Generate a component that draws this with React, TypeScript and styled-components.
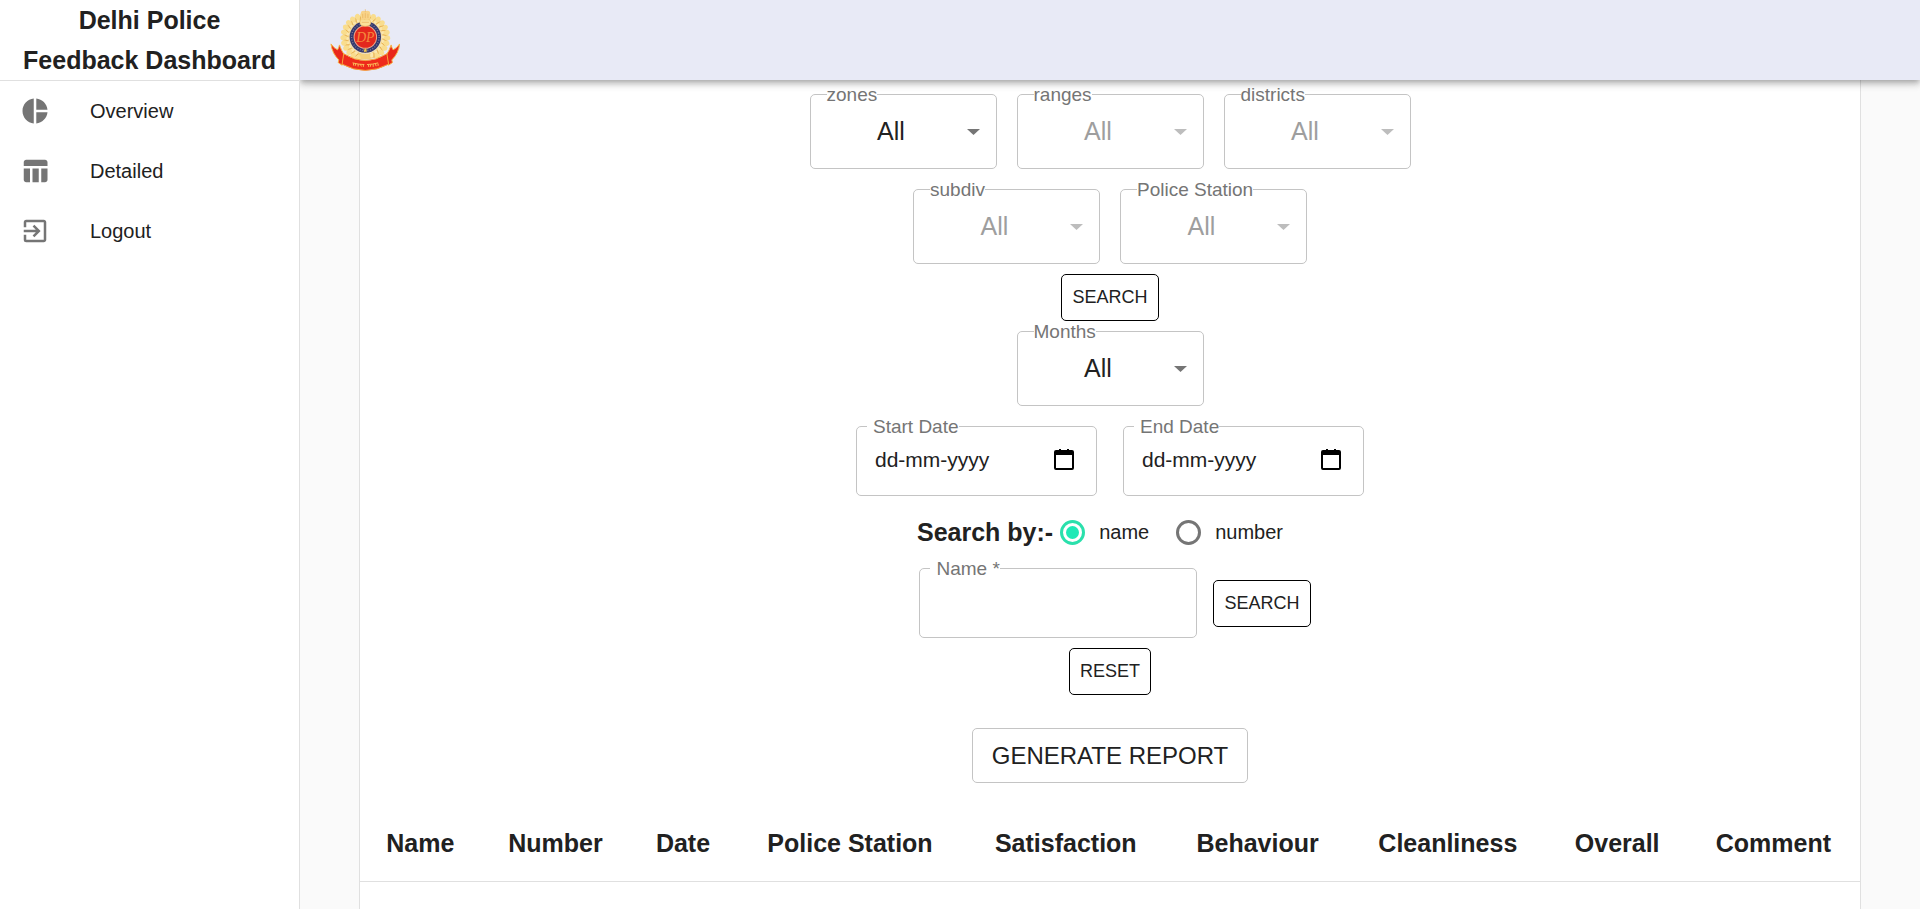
import React, { useState } from "react";
import styled, { createGlobalStyle } from "styled-components";
import { MdExitToApp, MdPieChart, MdTableChart } from "react-icons/md";

const ink = "#212121";
const muted = "#757575";
const line = "#e0e0e0";
const outline = "#c4c4c4";

const GlobalStyle = createGlobalStyle`
  *, *::before, *::after { box-sizing: border-box; }
  body {
    margin: 0;
    background: #fafafa;
    color: ${ink};
    font-family: "Liberation Sans", Arial, Helvetica, sans-serif;
    font-size: 20px;
    line-height: 30px;
  }
  button, input, select { font-family: inherit; color: inherit; }
`;

const Shell = styled.div`
  display: flex;
  min-height: 100vh;
`;

const Sidebar = styled.aside`
  position: relative;
  z-index: 2;
  flex: 0 0 300px;
  background: #fff;
  border-right: 1px solid ${line};
`;

const Brand = styled.h1`
  margin: 0;
  padding: 0 20px;
  border-bottom: 1px solid ${line};
  font-size: 25px;
  line-height: 40px;
  text-align: center;
`;

const NavLink = styled.a`
  display: flex;
  align-items: center;
  gap: 40px;
  height: 60px;
  padding: 0 20px;
  color: ${ink};
  text-decoration: none;

  svg {
    flex: none;
    width: 30px;
    height: 30px;
    color: ${muted};
  }
`;

const Page = styled.div`
  display: flex;
  flex: 1;
  flex-direction: column;
  min-width: 0;
`;

const TopBar = styled.header`
  position: relative;
  z-index: 1;
  display: flex;
  align-items: center;
  height: 80px;
  padding: 0 30px;
  background: #e8eaf6;
  box-shadow: 0 2px 5px -1px rgba(0, 0, 0, 0.2), 0 5px 6px rgba(0, 0, 0, 0.14),
    0 1px 12px rgba(0, 0, 0, 0.12);
`;

const Logo = styled.svg`
  width: 70px;
  height: 64px;
`;

const Card = styled.main`
  flex: 1;
  width: 100%;
  max-width: 1502px;
  margin: 0 auto;
  padding-top: 14px;
  background: #fff;
  border: solid ${line};
  border-width: 0 1px;
`;

const Filters = styled.div`
  display: flex;
  flex-direction: column;
  align-items: center;
`;

const Row = styled.div<{ $gap?: number; $below?: number }>`
  display: flex;
  flex-wrap: wrap;
  align-items: center;
  justify-content: center;
  gap: ${(p) => p.$gap ?? 20}px;
  margin-bottom: ${(p) => p.$below ?? 20}px;
`;

const Field = styled.div<{ $width: number; $tall?: boolean }>`
  position: relative;
  display: flex;
  align-items: center;
  width: ${(p) => p.$width}px;
  height: ${(p) => (p.$tall ? 75 : 70)}px;
  border: 1px solid ${outline};
  border-radius: 5px;
`;

const FieldLabel = styled.label<{ $notch?: boolean }>`
  position: absolute;
  top: -10px;
  left: ${(p) => (p.$notch ? 10 : 16)}px;
  padding-left: ${(p) => (p.$notch ? 6 : 0)}px;
  background: #fff;
  color: ${muted};
  font-size: 19px;
  line-height: 20px;
  white-space: nowrap;
`;

const Select = styled.select`
  width: 100%;
  height: 100%;
  padding: 0 24px 2px 0;
  border: 0;
  background: transparent;
  appearance: none;
  font-size: 25px;
  text-align: center;
  text-align-last: center;

  &:disabled {
    color: #9e9e9e;
    opacity: 1;
  }
`;

const Arrow = styled.svg<{ $dim?: boolean }>`
  position: absolute;
  right: 16px;
  width: 13px;
  height: 6px;
  fill: ${(p) => (p.$dim ? "#bdbdbd" : muted)};
  pointer-events: none;
`;

const TextInput = styled.input`
  flex: 1;
  min-width: 0;
  height: 100%;
  padding: 0 18px 2px;
  border: 0;
  background: transparent;
  font-size: 21px;

  &::placeholder {
    color: ${ink};
    opacity: 1;
  }
`;

const CalendarButton = styled.button`
  display: flex;
  margin-right: 21px;
  padding: 0 0 2px;
  border: 0;
  background: none;
  color: #000;
`;

const SmallButton = styled.button`
  height: 47px;
  padding: 0 10px;
  background: #fff;
  border: 1px solid #000;
  border-radius: 5px;
  font-size: 18px;
  text-transform: uppercase;
`;

const ReportButton = styled.button`
  height: 55px;
  margin: 33px 0 20px;
  padding: 0 19px;
  background: #fff;
  border: 1px solid ${outline};
  border-radius: 5px;
  font-size: 24px;
  text-transform: uppercase;
`;

const SearchBy = styled.div`
  display: flex;
  align-items: center;
  height: 72px;
`;

const SearchByTitle = styled.h2`
  margin: 0;
  font-size: 25px;
  line-height: 40px;
`;

const RadioLabel = styled.label`
  display: flex;
  align-items: center;
  gap: 14px;
  margin-right: 20px;
  padding-left: 7px;
`;

const Radio = styled.input`
  display: grid;
  place-content: center;
  width: 25px;
  height: 25px;
  margin: 0;
  appearance: none;
  border: 3px solid ${muted};
  border-radius: 50%;

  &:checked {
    border-color: #2ae0ac;
  }

  &:checked::before {
    content: "";
    width: 13px;
    height: 13px;
    border-radius: 50%;
    background: #1de9b6;
  }
`;

const NameRow = styled.div`
  display: flex;
  align-items: center;
  gap: 16px;
  padding-left: 10px;
  margin-bottom: 10px;
`;

const Table = styled.table`
  width: 100%;
  border-collapse: collapse;
`;

const HeadCell = styled.th`
  padding: 20px 20px 18px;
  border-bottom: 1px solid ${line};
  font-size: 25px;
  line-height: 40px;
  text-align: center;
  white-space: nowrap;
`;

function SelectField({ id, label, disabled }: { id: string; label: string; disabled?: boolean }) {
  return (
    <Field $width={187} $tall>
      <FieldLabel htmlFor={id}>{label}</FieldLabel>
      <Select id={id} disabled={disabled}>
        <option>All</option>
      </Select>
      <Arrow $dim={disabled} viewBox="0 0 13 6" aria-hidden="true">
        <path d="M0 0h13L6.5 6z" />
      </Arrow>
    </Field>
  );
}

function DateField({ id, label }: { id: string; label: string }) {
  return (
    <Field $width={241}>
      <FieldLabel htmlFor={id} $notch>
        {label}
      </FieldLabel>
      <TextInput id={id} type="text" placeholder="dd-mm-yyyy" />
      <CalendarButton type="button" aria-label={`Choose ${label}`}>
        <svg width="22" height="22" viewBox="0 0 22 22" aria-hidden="true">
          <path
            fill="currentColor"
            d="M6 0v1H3Q1 1 1 3v16q0 2 2 2h16q2 0 2-2V3q0-2-2-2h-3V0h-2v1H8V0zM3 6h16v13H3z"
            fillRule="evenodd"
          />
        </svg>
      </CalendarButton>
    </Field>
  );
}

const leafAngles = Array.from({ length: 23 }, (_, i) => -154 + i * 14);

function PoliceEmblem() {
  return (
    <Logo viewBox="28 24 214 192" role="img" aria-label="Delhi Police emblem">
      <circle cx="136" cy="112" r="59" fill="none" stroke="#f3cf7c" strokeWidth="18" />
      {leafAngles.map((a) => (
        <g key={a} transform={`rotate(${a} 136 112)`}>
          <ellipse cx="129" cy="46" rx="8" ry="10" fill="#f9dd8e" transform="rotate(-30 129 46)" />
          <ellipse cx="142" cy="55" rx="5" ry="8" fill="#fbe7ae" transform="rotate(30 142 55)" />
          <path d="M133 58l6-14" stroke="#e2a545" strokeWidth="2" />
        </g>
      ))}
      <circle cx="136" cy="111" r="50" fill="#f3d9a0" />
      <circle cx="136" cy="111" r="48" fill="#34386f" />
      <circle cx="136" cy="111" r="42" fill="none" stroke="#7f7f97" strokeWidth="4" strokeDasharray="3 5" />
      <circle cx="136" cy="111" r="36" fill="#f2a98a" />
      <circle cx="136" cy="111" r="33" fill="#e4281d" />
      <text
        x="136"
        y="125"
        textAnchor="middle"
        fontFamily="Liberation Serif, serif"
        fontStyle="italic"
        fontSize="42"
        fill="#f58a3c"
      >
        DP
      </text>
      <path d="M136 144l2 5 5 0-4 4 2 5-5-3-5 3 2-5-4-4h5z" fill="#f7c948" />
      <path d="M122 58q-6 10 1 17 13 6 26 0 7-7 1-17z" fill="#fae19a" stroke="#f0c264" strokeWidth="2" />
      <path d="M123 34q6-6 13-2 8-4 14 2 3 8-2 14l3 9h-29l3-9q-5-6-2-14z" fill="#f8d388" />
      <path d="M136 26v9M128 40v13M136 38v15M144 40v13M125 66h22" stroke="#e8b25c" strokeWidth="2" />
      <path
        d="M31 132q9 13 20 18 4-6 6-15 5 16 15 31l-7 31-12-8 2-8q-21-21-24-49zM241 132q-9 13-20 18-4-6-6-15-5 16-15 31l7 31 12-8-2-8q21-21 24-49z"
        fill="#e9271b"
        stroke="#f5b544"
        strokeWidth="3"
        strokeLinejoin="round"
      />
      <path
        d="M70 162q66 42 132 0l5 32q-71 38-142 0z"
        fill="#ee2b1c"
        stroke="#f6a33b"
        strokeWidth="3"
        strokeLinejoin="round"
      />
      <path
        d="M97 190q18 5 36 5m8 0q17 0 34-5M100 191v7m7-6l-2 7m9-6v8m7-7l3 7m6-6v7m16-7v7m7-7l-2 7m9-8v8m7-9l2 7m6-8v7"
        fill="none"
        stroke="#f9c05a"
        strokeWidth="3"
      />
    </Logo>
  );
}

const columns = [
  "Name",
  "Number",
  "Date",
  "Police Station",
  "Satisfaction",
  "Behaviour",
  "Cleanliness",
  "Overall",
  "Comment",
];

export default function App() {
  const [mode, setMode] = useState("name");

  return (
    <>
      <GlobalStyle />
      <Shell>
        <Sidebar>
          <Brand>Delhi Police Feedback Dashboard</Brand>
          <nav>
            <NavLink href="#overview">
              <MdPieChart />
              Overview
            </NavLink>
            <NavLink href="#detailed">
              <MdTableChart />
              Detailed
            </NavLink>
            <NavLink href="#logout">
              <MdExitToApp />
              Logout
            </NavLink>
          </nav>
        </Sidebar>
        <Page>
          <TopBar>
            <PoliceEmblem />
          </TopBar>
          <Card>
            <Filters>
              <Row>
                <SelectField id="zones" label="zones" />
                <SelectField id="ranges" label="ranges" disabled />
                <SelectField id="districts" label="districts" disabled />
              </Row>
              <Row $below={10}>
                <SelectField id="subdiv" label="subdiv" disabled />
                <SelectField id="station" label="Police Station" disabled />
              </Row>
              <Row $below={10}>
                <SmallButton type="button">Search</SmallButton>
              </Row>
              <Row>
                <SelectField id="months" label="Months" />
              </Row>
              <Row $gap={26} $below={0}>
                <DateField id="start" label="Start Date" />
                <DateField id="end" label="End Date" />
              </Row>
              <SearchBy role="radiogroup" aria-labelledby="search-by">
                <SearchByTitle id="search-by">Search by:-</SearchByTitle>
                <RadioLabel>
                  <Radio
                    type="radio"
                    name="mode"
                    checked={mode === "name"}
                    onChange={() => setMode("name")}
                  />
                  name
                </RadioLabel>
                <RadioLabel>
                  <Radio
                    type="radio"
                    name="mode"
                    checked={mode === "number"}
                    onChange={() => setMode("number")}
                  />
                  number
                </RadioLabel>
              </SearchBy>
              <NameRow>
                <Field $width={278}>
                  <FieldLabel htmlFor="query" $notch>
                    Name *
                  </FieldLabel>
                  <TextInput id="query" type="text" required />
                </Field>
                <SmallButton type="button">Search</SmallButton>
              </NameRow>
              <SmallButton type="button">Reset</SmallButton>
              <ReportButton type="button">Generate Report</ReportButton>
            </Filters>
            <Table>
              <thead>
                <tr>
                  {columns.map((name) => (
                    <HeadCell key={name} scope="col">
                      {name}
                    </HeadCell>
                  ))}
                </tr>
              </thead>
            </Table>
          </Card>
        </Page>
      </Shell>
    </>
  );
}
